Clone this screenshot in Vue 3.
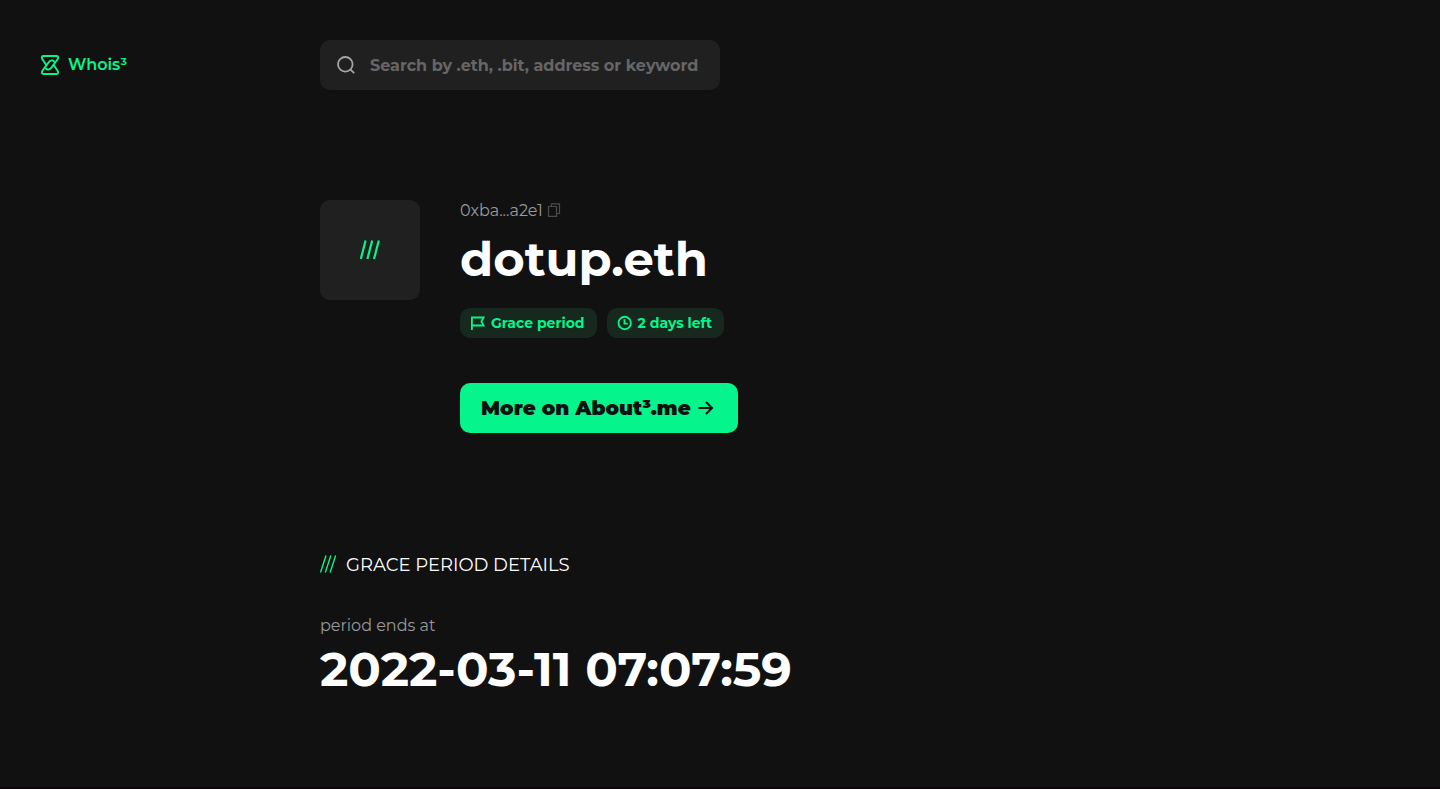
<script setup>
import { ref } from 'vue'

const query = ref('')
const profile = {
  address: '0xba...a2e1',
  name: 'dotup.eth',
  endsAt: '2022-03-11 07:07:59',
}
</script>

<template>
  <div class="page">
    <header class="header">
      <a class="brand" href="#">
        <svg class="brand-icon" viewBox="0 0 20 22" fill="none" stroke="currentColor" stroke-width="1.900" stroke-linejoin="round" stroke-linecap="round" aria-hidden="true">
          <path d="M6.400 11.200L2.400 5.200C1.200 3.300 1.900 2 3.600 2H16.400C18.100 2 18.800 3.300 17.600 5.200L11.600 13.400C9.600 16 7.200 16.200 6 14.600" />
          <path d="M13.600 10.800L17.600 16.800C18.800 18.700 18.100 20 16.400 20H3.600C1.900 20 1.200 18.700 2.400 16.800L8.400 8.600C10.400 6 12.800 5.800 14 7.400" />
        </svg>
        <span>Whois³</span>
      </a>
      <label class="search">
        <svg class="search-icon" viewBox="0 0 20 20" fill="none" stroke="currentColor" stroke-width="1.800" aria-hidden="true">
          <circle cx="9.300" cy="9.300" r="7.300" />
          <path d="M14.300 14.300L18.200 18.200" />
        </svg>
        <input v-model="query" class="search-input" type="text" aria-label="Search" placeholder="Search by .eth, .bit, address or keyword" />
      </label>
    </header>

    <main class="main">
      <section class="profile">
        <div class="avatar">
          <svg class="avatar-icon" viewBox="0 0 20 20" fill="none" stroke="currentColor" stroke-width="2.200" aria-hidden="true">
            <path d="M.800 19L5.600 .500M7.400 19L12.200 .500M14 19L18.800 .500" />
          </svg>
        </div>
        <div class="info">
          <div class="address">
            <span>{{ profile.address }}</span>
            <button class="copy" type="button" aria-label="Copy address">
              <svg class="copy-icon" viewBox="0 0 14 16" fill="none" stroke="currentColor" stroke-width="1.200" aria-hidden="true">
                <path d="M4.500 3.500V.900H12.500V10.500H9.500M1.500 3.500H9.500V13.300H1.500Z" />
              </svg>
            </button>
          </div>
          <h1 class="name">{{ profile.name }}</h1>
          <div class="tags">
            <span class="tag">
              <svg class="tag-icon" viewBox="0 0 16 16" fill="none" stroke="currentColor" stroke-width="1.800" aria-hidden="true">
                <path d="M1.900 15V2.500H13.600L11.400 6.500L13.600 10.500H1.900" />
              </svg>
              <span>Grace period</span>
            </span>
            <span class="tag">
              <svg class="tag-icon" viewBox="0 0 16 16" fill="none" stroke="currentColor" stroke-width="1.900" aria-hidden="true">
                <circle cx="7.700" cy="8" r="6.200" />
                <path d="M7.500 4.300V8.600H10.800" />
              </svg>
              <span>2 days left</span>
            </span>
          </div>
          <a class="more" href="#">
            <span>More on About³.me</span>
            <svg class="more-icon" viewBox="0 0 16 16" fill="none" stroke="currentColor" stroke-width="2" aria-hidden="true">
              <path d="M.500 8H14M8 2L14 8L8 14" />
            </svg>
          </a>
        </div>
      </section>

      <section class="details">
        <h2 class="details-title">
          <svg class="details-icon" viewBox="0 0 16 20" fill="none" stroke="currentColor" stroke-width="1.400" aria-hidden="true">
            <path d="M.500 17.500L6 .500M5.300 17.500L10.800 .500M10.100 17.500L15.600 .500" />
          </svg>
          <span>GRACE PERIOD DETAILS</span>
        </h2>
        <p class="label">period ends at</p>
        <p class="value">{{ profile.endsAt }}</p>
      </section>
    </main>
    <footer class="footer"></footer>
  </div>
</template>

<style>
body {
  background: #111111;
}
</style>

<style scoped>
.page {
  display: flex;
  flex-direction: column;
  min-height: 100vh;
  background: #111111;
  color: #ffffff;
  font-family: Montserrat, Inter, sans-serif;
}

.page,
.page * {
  box-sizing: border-box;
}

svg {
  display: block;
  flex: none;
}

.header {
  display: grid;
  grid-template-columns: 280px minmax(0, 400px);
  align-items: center;
  padding: 40px;
}

.brand {
  display: flex;
  align-items: center;
  gap: 8px;
  color: #05f58c;
  font-size: 16px;
  font-weight: 600;
  line-height: 22px;
  text-decoration: none;
}

.brand-icon {
  width: 20px;
  height: 22px;
}

.search {
  display: flex;
  align-items: center;
  gap: 14px;
  height: 50px;
  padding: 0 16px;
  border-radius: 10px;
  background: #202020;
  color: #a5a5a5;
}

.search-icon {
  width: 20px;
  height: 20px;
}

.search-input {
  flex: 1;
  min-width: 0;
  padding: 0;
  border: 0;
  outline: 0;
  background: transparent;
  color: #ffffff;
  font: inherit;
  font-size: 16px;
  font-weight: 700;
}

.search-input::placeholder {
  color: #666666;
  opacity: 1;
}

.main {
  flex: 1;
  padding: 70px 40px 40px 320px;
}

.profile {
  display: flex;
  gap: 40px;
  align-items: flex-start;
}

.avatar {
  display: flex;
  flex: none;
  align-items: center;
  justify-content: center;
  width: 100px;
  height: 100px;
  border-radius: 10px;
  background: #202020;
  color: #05f58c;
}

.avatar-icon {
  width: 20px;
  height: 20px;
}

.address {
  display: flex;
  align-items: center;
  gap: 4px;
  color: #999999;
  font-size: 16px;
  font-weight: 400;
  line-height: 22px;
}

.copy {
  padding: 0;
  border: 0;
  background: transparent;
  color: #4c4c4c;
  cursor: pointer;
}

.copy-icon {
  width: 14px;
  height: 16px;
}

.name {
  margin: 6px 0 18px;
  font-size: 48px;
  font-weight: 700;
  line-height: 62px;
}

.tags {
  display: flex;
  flex-wrap: wrap;
  gap: 10px;
}

.tag {
  display: flex;
  align-items: center;
  gap: 5px;
  height: 30px;
  padding: 0 12px 0 10px;
  border-radius: 10px;
  background: #17281f;
  color: #05f58c;
  font-size: 14px;
  font-weight: 700;
}

.tag-icon {
  width: 16px;
  height: 16px;
}

.more {
  display: flex;
  align-items: center;
  gap: 7px;
  width: fit-content;
  height: 50px;
  margin-top: 45px;
  padding: 0 24px 0 21px;
  border-radius: 10px;
  background: #05f58c;
  color: #111111;
  font-size: 20px;
  font-weight: 900;
  text-decoration: none;
}

.more-icon {
  width: 16px;
  height: 16px;
}

.details {
  margin-top: 120px;
}

.details-title {
  display: flex;
  align-items: center;
  gap: 10px;
  margin: 0;
  font-size: 18px;
  font-weight: 400;
  line-height: 24px;
}

.details-icon {
  width: 16px;
  height: 20px;
  color: #05f58c;
}

.label {
  margin: 38px 0 0;
  color: #999999;
  font-size: 16px;
  line-height: 22px;
}

.value {
  margin: 1px 0 0;
  font-size: 48px;
  font-weight: 700;
  line-height: 62px;
}

.footer {
  height: 2px;
  background: #0b0509;
}
</style>
